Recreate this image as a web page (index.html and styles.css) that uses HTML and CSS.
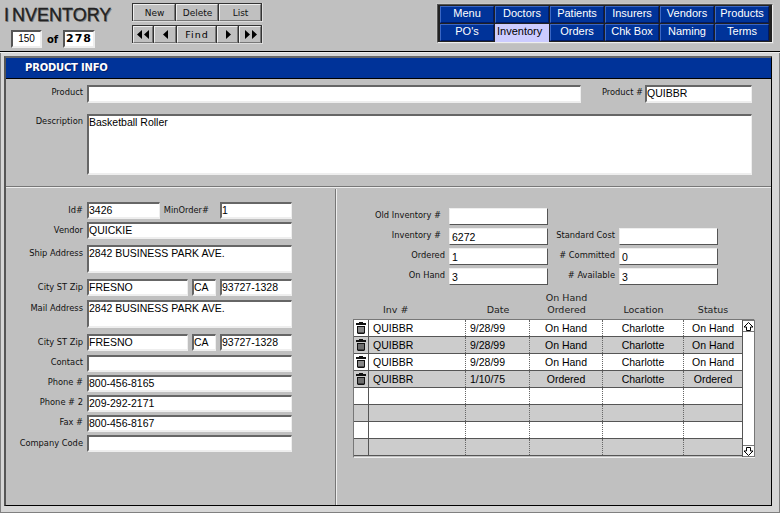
FILE: index.html
```html
<!DOCTYPE html>
<html>
<head>
<meta charset="utf-8">
<title>Inventory</title>
<link rel="stylesheet" href="styles.css">
</head>
<body>
<div class="page">
  <header class="header">
    <div class="brand">
      <div class="title">INVENTORY</div>
      <div class="counter"><span class="count">150</span><span class="of">of</span><span class="total">278</span></div>
    </div>
    <div class="tools">
      <div class="btn-group">
        <span class="btn w42">New</span><span class="btn w42">Delete</span><span class="btn w43">List</span>
      </div>
      <div class="btn-group">
        <span class="btn w20"><svg width="15" height="9" viewBox="0 0 15 9"><path d="M6 0v9L1 4.500zM13 0v9L8 4.500z"/></svg></span>
        <span class="btn w22"><svg width="7" height="9" viewBox="0 0 7 9"><path d="M6 0v9L1 4.500z"/></svg></span>
        <span class="btn w40 find">Find</span>
        <span class="btn w21"><svg width="7" height="9" viewBox="0 0 7 9"><path d="M1 0v9l5-4.500z"/></svg></span>
        <span class="btn w22"><svg width="15" height="9" viewBox="0 0 15 9"><path d="M2 0v9l5-4.500zM9 0v9l5-4.500z"/></svg></span>
      </div>
    </div>
    <nav class="nav">
      <span class="tab">Menu</span><span class="tab">Doctors</span><span class="tab">Patients</span><span class="tab">Insurers</span><span class="tab">Vendors</span><span class="tab">Products</span>
      <span class="tab">PO's</span><span class="tab active">Inventory</span><span class="tab">Orders</span><span class="tab">Chk Box</span><span class="tab">Naming</span><span class="tab">Terms</span>
    </nav>
  </header>
  <div class="frame">
    <main class="panel">
      <h1 class="bar">PRODUCT INFO</h1>
      <section class="product">
        <div class="row">
          <label class="lbl lbl-left">Product</label>
          <div class="field w494 h18"></div>
          <label class="lbl lbl-pn">Product #</label>
          <div class="field w107 h18">QUIBBR</div>
        </div>
        <div class="row desc">
          <label class="lbl lbl-left">Description</label>
          <div class="field w665 h61">Basketball Roller</div>
        </div>
      </section>
      <section class="lower">
        <div class="vendor">
          <div class="row"><label class="lbl lbl-left lbl-low">Id#</label><div class="field w73">3426</div><label class="lbl lbl-min lbl-low">MinOrder#</label><div class="field w72">1</div></div>
          <div class="row gap3"><label class="lbl lbl-left lbl-low">Vendor</label><div class="field w205">QUICKIE</div></div>
          <div class="row gap6"><label class="lbl lbl-left lbl-low">Ship Address</label><div class="field w205 h28">2842 BUSINESS PARK AVE.</div></div>
          <div class="row gap6"><label class="lbl lbl-left lbl-low">City ST Zip</label><div class="field w101">FRESNO</div><div class="field w24 ml4">CA</div><div class="field w72 ml4">93727-1328</div></div>
          <div class="row gap4"><label class="lbl lbl-left lbl-low">Mail Address</label><div class="field w205 h28">2842 BUSINESS PARK AVE.</div></div>
          <div class="row gap6"><label class="lbl lbl-left lbl-low">City ST Zip</label><div class="field w101">FRESNO</div><div class="field w24 ml4">CA</div><div class="field w72 ml4">93727-1328</div></div>
          <div class="row gap4"><label class="lbl lbl-left">Contact</label><div class="field w205"></div></div>
          <div class="row gap3"><label class="lbl lbl-left">Phone #</label><div class="field w205">800-456-8165</div></div>
          <div class="row gap3"><label class="lbl lbl-left">Phone # 2</label><div class="field w205">209-292-2171</div></div>
          <div class="row gap3"><label class="lbl lbl-left">Fax #</label><div class="field w205">800-456-8167</div></div>
          <div class="row gap3"><label class="lbl lbl-left lbl-low">Company Code</label><div class="field w205"></div></div>
        </div>
        <div class="stock">
          <div class="stock-grid">
            <label class="lbl">Old Inventory #</label><div class="raised"></div><span></span><span></span>
            <label class="lbl">Inventory #</label><div class="raised">6272</div><label class="lbl">Standard Cost</label><div class="raised"></div>
            <label class="lbl">Ordered</label><div class="raised">1</div><label class="lbl"># Committed</label><div class="raised">0</div>
            <label class="lbl">On Hand</label><div class="raised">3</div><label class="lbl"># Available</label><div class="raised">3</div>
          </div>
          <div class="thead">
            <span class="th c-trash"></span><span class="th c-inv th-inv">Inv #</span><span class="th c-date">Date</span><span class="th c-hand">On Hand<br>Ordered</span><span class="th c-loc">Location</span><span class="th c-stat">Status</span>
          </div>
          <div class="table">
            <div class="rows">
              <div class="tr"><span class="td c-trash"><svg class="trash" width="12" height="12" viewBox="0 0 12 12"><path fill-rule="evenodd" d="M4 0h4v1h3v2H1V1h3zM2 4h8v7l-1 1H3l-1-1zM3.500 5v5.500h1V5zm2 0v5.500h1V5zm2 0v5.500h1V5z"/></svg></span><span class="td c-inv left">QUIBBR</span><span class="td c-date left">9/28/99</span><span class="td c-hand">On Hand</span><span class="td c-loc">Charlotte</span><span class="td c-stat">On Hand</span></div>
              <div class="tr"><span class="td c-trash"><svg class="trash" width="12" height="12" viewBox="0 0 12 12"><path fill-rule="evenodd" d="M4 0h4v1h3v2H1V1h3zM2 4h8v7l-1 1H3l-1-1zM3.500 5v5.500h1V5zm2 0v5.500h1V5zm2 0v5.500h1V5z"/></svg></span><span class="td c-inv left">QUIBBR</span><span class="td c-date left">9/28/99</span><span class="td c-hand">On Hand</span><span class="td c-loc">Charlotte</span><span class="td c-stat">On Hand</span></div>
              <div class="tr"><span class="td c-trash"><svg class="trash" width="12" height="12" viewBox="0 0 12 12"><path fill-rule="evenodd" d="M4 0h4v1h3v2H1V1h3zM2 4h8v7l-1 1H3l-1-1zM3.500 5v5.500h1V5zm2 0v5.500h1V5zm2 0v5.500h1V5z"/></svg></span><span class="td c-inv left">QUIBBR</span><span class="td c-date left">9/28/99</span><span class="td c-hand">On Hand</span><span class="td c-loc">Charlotte</span><span class="td c-stat">On Hand</span></div>
              <div class="tr"><span class="td c-trash"><svg class="trash" width="12" height="12" viewBox="0 0 12 12"><path fill-rule="evenodd" d="M4 0h4v1h3v2H1V1h3zM2 4h8v7l-1 1H3l-1-1zM3.500 5v5.500h1V5zm2 0v5.500h1V5zm2 0v5.500h1V5z"/></svg></span><span class="td c-inv left">QUIBBR</span><span class="td c-date left">1/10/75</span><span class="td c-hand">Ordered</span><span class="td c-loc">Charlotte</span><span class="td c-stat">Ordered</span></div>
              <div class="tr"><span class="td c-trash"></span><span class="td c-inv"></span><span class="td c-date"></span><span class="td c-hand"></span><span class="td c-loc"></span><span class="td c-stat"></span></div>
              <div class="tr"><span class="td c-trash"></span><span class="td c-inv"></span><span class="td c-date"></span><span class="td c-hand"></span><span class="td c-loc"></span><span class="td c-stat"></span></div>
              <div class="tr"><span class="td c-trash"></span><span class="td c-inv"></span><span class="td c-date"></span><span class="td c-hand"></span><span class="td c-loc"></span><span class="td c-stat"></span></div>
              <div class="tr"><span class="td c-trash"></span><span class="td c-inv"></span><span class="td c-date"></span><span class="td c-hand"></span><span class="td c-loc"></span><span class="td c-stat"></span></div>
            </div>
            <div class="scroll">
              <span class="arrow"><svg width="11" height="11" viewBox="0 0 11 11"><path d="M5.500 1.500L10 6H7.500v3.500h-4V6H1z" fill="#fff" stroke="#000"/></svg></span>
              <span class="arrow"><svg width="11" height="11" viewBox="0 0 11 11"><path d="M5.500 9.500L10 5H7.500V1.500h-4V5H1z" fill="#fff" stroke="#000"/></svg></span>
            </div>
          </div>
        </div>
      </section>
    </main>
  </div>
</div>
</body>
</html>
```
FILE: styles.css
```css
* { box-sizing: border-box; }
html, body { margin: 0; padding: 0; }
body { width: 780px; height: 513px; overflow: hidden; background: #c0c0c0; font-family: "Liberation Sans", Arial, sans-serif; color: #000; }
.page { width: 780px; height: 513px; display: flex; flex-direction: column; }

/* header */
.header { height: 52px; flex: none; display: flex; background: #c0c0c0; border-bottom: 1px solid #000; box-shadow: 0 1px 0 #eee; position: relative; }
.brand { width: 132px; padding: 5px 0 0 4px; }
.title { font-size: 18px; line-height: 20px; height: 21px; color: #222; text-shadow: 1px 1px 0 #808080; -webkit-text-stroke: .3px #222; white-space: nowrap; }
.title::first-letter { margin-right: 3px; }
.counter { display: flex; align-items: center; margin: 4px 0 0 7px; }
.count, .total { display: block; height: 18px; background: #fff; border: 2px solid; border-color: #555 #eee #eee #555; text-align: center; line-height: 14px; }
.count { width: 31px; font-size: 10px; }
.total { width: 32px; font-size: 11px; font-weight: bold; letter-spacing: 1px; font-family: "DejaVu Sans", sans-serif; }
.of { width: 21px; text-align: center; font-weight: bold; font-size: 10px; font-family: "DejaVu Sans", sans-serif; }
.tools { padding-top: 3px; width: 305px; }
.btn-group { display: flex; width: 131px; height: 19px; padding: 1px; gap: 1px; background: #333; margin-bottom: 3px; border-right: 1px solid #ddd; border-bottom: 1px solid #ddd; }
.btn { height: 17px; background: #c0c0c0; border: 1px solid; border-color: #eee #777 #777 #eee; display: flex; align-items: center; justify-content: center; font-family: "DejaVu Sans", sans-serif; font-size: 9px; color: #111; padding-left: 1px; }
.find { letter-spacing: 1px; font-size: 9.500px; color: #000; }
.w42 { width: 42px; } .w43 { width: 42px; } .w20 { width: 20px; } .w22 { width: 22px; } .w40 { width: 40px; } .w21 { width: 21px; }
.btn svg { display: block; fill: #000; }
.nav { width: 336px; height: 39px; margin-top: 4px; padding: 1px 2px; display: grid; grid-template-columns: repeat(6, 54px); grid-auto-rows: 17px; gap: 1px; background: #222; border: 1px solid; border-color: #555 #eee #eee #555; outline: 1px solid #c8c8c8; }
.tab { background: #003399; color: #fff; font-size: 11px; line-height: 13px; text-align: center; border: 1px solid; border-color: #3a66c4 #001a66 #001a66 #3a66c4; }
.active { background: #ccccff; color: #000; border-color: #ccccff; text-align: left; padding-left: 1px; line-height: 13px; height: 18px; }

/* frame */
.frame { flex: 1; min-height: 0; background: #d6d6d6; padding: 4px 7px 6px 3px; border: 1px solid #808080; border-top: 0; }
.panel { height: 100%; display: flex; flex-direction: column; background: #c0c0c0; border: 1px solid #000; border-top: 2px solid #666; border-left: 2px solid #555; }
.bar { flex: none; margin: 0; height: 21px; background: #003399; border-bottom: 1px solid #000; color: #fff; font-size: 10px; font-weight: bold; line-height: 19px; padding-left: 19px; font-family: "DejaVu Sans", sans-serif; letter-spacing: -.2px; text-shadow: 1px 1px 0 #001a66; }
.product { flex: none; height: 108px; padding-top: 6px; border-bottom: 1px solid #777; box-shadow: 0 1px 0 #eee; }
.row { display: flex; align-items: flex-start; }
.desc { margin-top: 11px; }
.gap3 { margin-top: 3px; }
.gap4 { margin-top: 4px; }
.gap6 { margin-top: 6px; }
.lbl { font-family: "DejaVu Sans", sans-serif; font-size: 8.300px; color: #111; line-height: 13px; padding-top: 1px; text-align: right; white-space: nowrap; }
.lbl-left { width: 77px; margin-right: 4px; flex: none; }
.lbl-low { padding-top: 2px; }
.lbl-pn { width: 62px; margin-right: 2px; }
.lbl-min { width: 60px; padding-right: 11px; }
.field { flex: none; height: 17px; background: #fff; border: 2px solid; border-width: 2px 1px 2px 2px; border-color: #666 #eee #eee #666; font-size: 10.500px; line-height: 13px; overflow: hidden; white-space: nowrap; }
.w494 { width: 494px; } .w107 { width: 107px; } .w665 { width: 665px; } .h61 { height: 61px; } .h18 { height: 18px; }
.w73 { width: 73px; } .w72 { width: 72px; } .w205 { width: 205px; } .w101 { width: 101px; } .w24 { width: 24px; }
.h28 { height: 28px; }
.ml4 { margin-left: 4px; }
.lower { flex: 1; display: flex; min-height: 0; margin-top: 2px; }
.vendor { width: 330px; flex: none; padding-top: 13px; border-right: 1px solid #777; box-shadow: 1px 0 0 #eee; }
.stock { flex: 1; padding: 19px 0 0 17px; }
.stock-grid { display: grid; grid-template-columns: 96px 99px 71px 99px; grid-auto-rows: 17px; row-gap: 3px; width: 365px; }
.stock-grid .lbl { padding-top: 0; padding-right: 8px; line-height: 14px; }
.stock-grid .raised + .lbl { padding-right: 4px; }
.raised { background: #fff; border: 1px solid; border-color: #eee #555 #555 #eee; font-size: 10.500px; line-height: 15px; padding: 1px 0 0 2px; }
.thead { display: flex; height: 26px; margin-top: 6px; margin-left: 1px; align-items: flex-end; }
.th { font-size: 9.500px; font-family: "DejaVu Sans", sans-serif; text-align: center; line-height: 12px; padding-bottom: 1px; color: #222; }
.th-inv { text-align: left; padding-left: 14px; }
.table { display: flex; width: 402px; height: 139px; margin-top: 2px; border: 1px solid; border-color: #777 #eee #eee #777; }
.rows { width: 388px; }
.tr { display: flex; height: 17px; background: #fff; border-bottom: 1px solid #555; }
.tr:nth-child(even) { background: #ccc; }
.td { display: flex; align-items: center; justify-content: center; font-size: 10.500px; height: 16px; border-right: 1px dotted #666; white-space: nowrap; }
.left { justify-content: flex-start; padding-left: 4px; }
.c-trash { width: 15px; flex: none; border-right: 1px solid #555; }
.c-inv { width: 97px; flex: none; }
.c-date { width: 64px; flex: none; }
.c-hand { width: 73px; flex: none; }
.c-loc { width: 81px; flex: none; }
.c-stat { width: 58px; flex: none; border-right: 0; }
.thead .c-trash { border: 0; }
.trash { display: block; fill: #111; margin-top: -1px; }
.scroll { flex: 1; background: #fff; border-left: 1px solid #555; border-right: 1px solid #777; display: flex; flex-direction: column; justify-content: space-between; }
.arrow { display: block; height: 12px; border: 1px solid #777; border-width: 1px 0; background: #fff; }
.arrow svg { display: block; }
```
